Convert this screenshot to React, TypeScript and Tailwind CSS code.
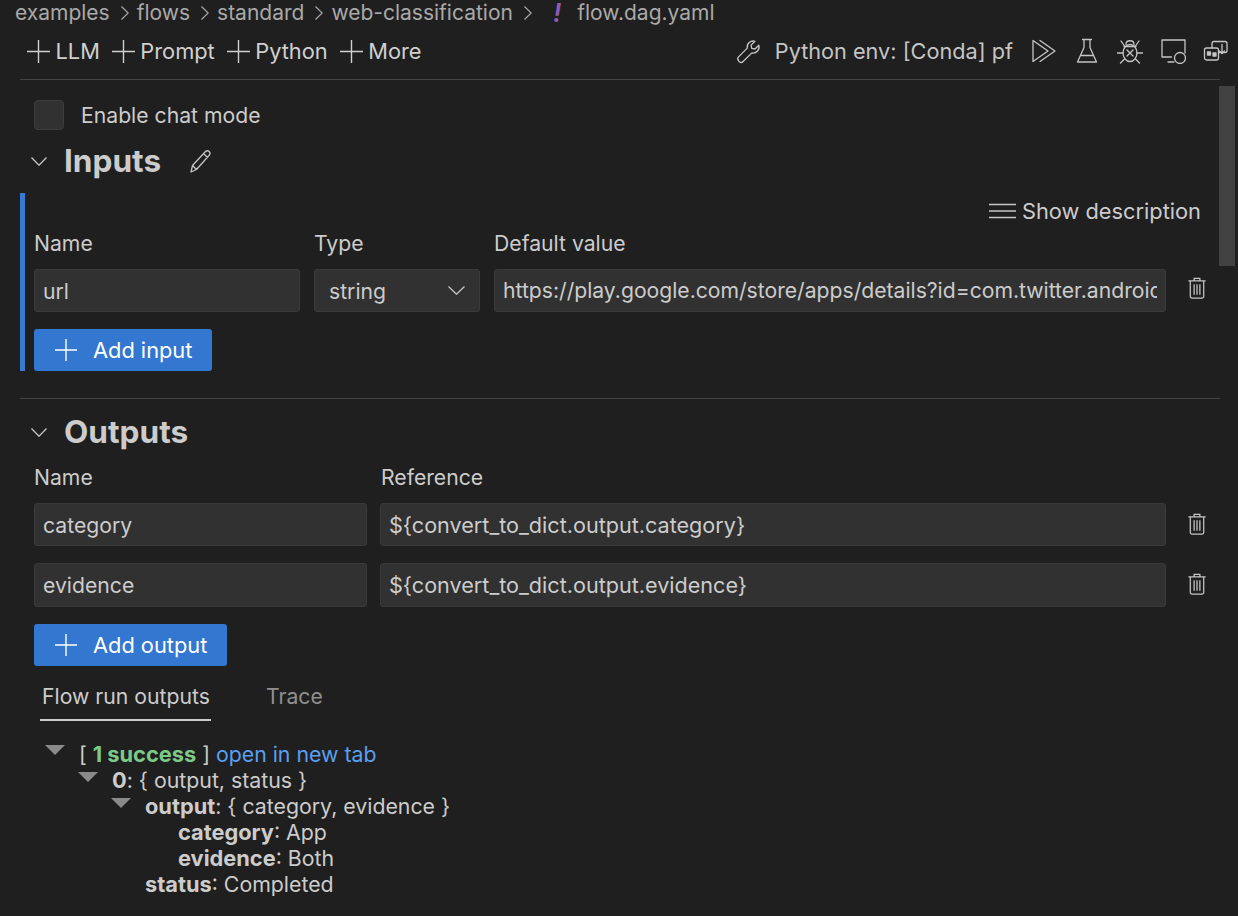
import type { ReactNode } from "react";

function Svg({ children }: { children: ReactNode }) {
  return (
    <svg width={26} height={26} viewBox="0 0 26 26" fill="none" stroke="#c5c5c5" strokeWidth={1.3} strokeLinejoin="round" strokeLinecap="round" className="shrink-0">
      {children}
    </svg>
  );
}

function PlusIcon({ size }: { size: number }) {
  return (
    <svg width={size} height={size} viewBox={`0 0 ${size} ${size}`} fill="none" stroke="currentColor" strokeWidth={1.4} className="shrink-0">
      <path d={`M${size / 2} 0v${size}M0 ${size / 2}h${size}`} />
    </svg>
  );
}

function ChevronDownIcon({ w = 16, h = 9 }: { w?: number; h?: number }) {
  return (
    <svg width={w} height={h} viewBox={`0 0 ${w} ${h}`} fill="none" stroke="#c5c5c5" strokeWidth={1.3} className="shrink-0">
      <path d={`M0.5 0.5L${w / 2} ${h - 0.8}L${w - 0.5} 0.5`} />
    </svg>
  );
}

function Crumb({ label }: { label: string }) {
  return (
    <>
      <span>{label}</span>
      <svg width="8" height="14" viewBox="0 0 8 14" fill="none" stroke="#a9a9a9" strokeWidth="1.2" className="ml-[11px] mr-[8px] shrink-0">
        <path d="M0.500 0.500L7.200 7L0.500 13.500" />
      </svg>
    </>
  );
}

function AddItem({ label }: { label: string }) {
  return (
    <div className="flex items-center">
      <PlusIcon size={23} />
      <span className="ml-[5.500px]">{label}</span>
    </div>
  );
}

function Trash() {
  return (
    <svg width="20" height="23" viewBox="0 0 20 24" fill="none" stroke="#c5c5c5" strokeWidth="1.3" className="shrink-0">
      <path d="M1 5h18M7 5V2.500h6V5M3 5v16.500a1.500 1.500 0 0 0 1.500 1.500h11a1.500 1.500 0 0 0 1.500-1.500V5M7 8.500v11M10 8.500v11M13 8.500v11" />
    </svg>
  );
}

function Field({ value, className }: { value: string; className: string }) {
  return (
    <div className={`flex items-center rounded-[3px] border border-[#3a3a3a] bg-[#313131] pl-[8px] pr-[8px] overflow-hidden whitespace-nowrap ${className}`}>
      <span className="block overflow-hidden">{value}</span>
    </div>
  );
}

function AddButton({ label, width }: { label: string; width: string }) {
  return (
    <button className={`h-[42px] ${width} flex items-center rounded-[3px] bg-[#3377d0] pl-[21px] text-white text-[21.800px]`}>
      <PlusIcon size={22} />
      <span className="ml-[16px]">{label}</span>
    </button>
  );
}

function Caret({ className }: { className: string }) {
  return <span className={`absolute w-0 h-0 border-l-[10px] border-r-[10px] border-t-[10px] border-l-transparent border-r-transparent border-t-[#8a8a8a] ${className}`} />;
}

export default function App() {
  return (
    <div className="relative w-[1238px] h-[916px] overflow-hidden bg-[#1f1f1f] text-[#cccccc] text-[21.200px] leading-[26px] font-['Inter',sans-serif]">
      {/* breadcrumb */}
      <div className="h-[25px] pl-[15px] flex items-center text-[21px] text-[#a9a9a9] whitespace-nowrap">
        <Crumb label="examples" />
        <Crumb label="flows" />
        <Crumb label="standard" />
        <Crumb label="web-classification" />
        <span className="ml-[13px] mr-[16px] text-[#8e5cb8] italic font-semibold text-[26px]">!</span>
        <span>flow.dag.yaml</span>
      </div>

      {/* toolbar */}
      <div className="ml-[20px] mr-[18px] h-[55px] pb-[2px] flex items-center justify-between border-b border-[#444444]">
        <div className="flex items-center gap-[12px] pl-[7px] text-[21.800px] text-[#d0d0d0]">
          <AddItem label="LLM" />
          <AddItem label="Prompt" />
          <AddItem label="Python" />
          <AddItem label="More" />
        </div>
        <div className="-mr-[9px] flex items-center text-[#c5c5c5] text-[21.700px]">
          <Svg>
            <path d="M3.500 22.500a2.600 2.600 0 0 1 0-3.600l8.800-8.800a6 6 0 0 1 7.600-6.800l-3.800 3.800.6 3.300 3.300.6 3.800-3.800a6 6 0 0 1-6.900 7.700l-8.800 8.600a2.600 2.600 0 0 1-4.600-1z" />
          </Svg>
          <span className="ml-[14px]">Python env: [Conda] pf</span>
          <div className="ml-[18px] flex items-center gap-[17px]">
            <Svg>
              <path d="M2 2.500v21l15-10.500z" />
              <path d="M9 2.500l15 10.500-15 10.500" />
            </Svg>
            <Svg>
              <path d="M8.500 1.500h9M10 1.500v8L3.500 24h19L16 9.500v-8M6.500 17.500h13" />
            </Svg>
            <Svg>
              <path d="M9 6.500c0-5 8-5 8 0M7 8.500h12" />
              <ellipse cx="13" cy="15" rx="7" ry="8.500" />
              <path d="M10 12l6 6M16 12l-6 6M4 3l3.500 5M22 3l-3.500 5M0.500 15H6M25.500 15H20M3.500 25l4-4M22.500 25l-4-4" />
            </Svg>
            <Svg>
              <path d="M11.500 19H2V2h23v13M8 24h6" />
              <circle cx="20" cy="20" r="5.500" />
            </Svg>
            <Svg>
              <rect x="1.500" y="10" width="14" height="12" rx="2" />
              <path d="M9 10V5.500a2 2 0 0 1 2-2h11a2 2 0 0 1 2 2v7a2 2 0 0 1-2 2h-6.500" />
              <path d="M19 6.500v9l-2.500-2.500M19 15.500l2.500-2.500" />
              <rect x="4.500" y="14" width="3" height="3" fill="#c5c5c5" />
              <rect x="10" y="15" width="3" height="3" fill="#c5c5c5" />
            </Svg>
          </div>
        </div>
      </div>

      {/* scrollbar */}
      <div className="absolute left-[1219px] top-[86px] w-[16px] h-[180px] bg-[#424242]" />

      {/* chat mode */}
      <div className="mt-[20px] ml-[34px] h-[30px] flex items-center">
        <span className="w-[30px] h-[30px] rounded-[4px] border border-[#3c3c3c] bg-[#313131]" />
        <span className="ml-[17px]">Enable chat mode</span>
      </div>

      {/* inputs */}
      <div className="mt-[13px] ml-[31px] h-[36px] flex items-center">
        <ChevronDownIcon />
        <h2 className="ml-[17px] text-[31.600px] font-bold leading-[36px]">Inputs</h2>
        <svg width="26" height="26" viewBox="0 0 26 26" fill="none" stroke="#c5c5c5" strokeWidth="1.3" className="ml-[27px]" strokeLinejoin="round">
          <path d="M3 24l1.500-6.500L17.500 3.500a2.600 2.600 0 0 1 3.700 0 2.800 2.800 0 0 1 0 3.800L8.500 21.500zM4.500 17.500l4 4M15.500 5.500l4 4" />
        </svg>
      </div>

      <div className="mt-[14px] ml-[20px] w-[1190px] h-[178px] border-l-[5px] border-[#3b7ad1] pl-[9px]">
        <div className="h-[36px] flex items-center justify-end pr-[9px] text-[21.800px]">
          <svg width="27" height="16" viewBox="0 0 27 16" fill="none" stroke="#c5c5c5" strokeWidth="1.4">
            <path d="M0 1.500h27M0 8h27M0 14.500h27" />
          </svg>
          <span className="ml-[6px]">Show description</span>
        </div>
        <div className="mt-[1px] grid grid-cols-[266px_166px_672px] gap-x-[14px] h-[26px]">
          <span>Name</span>
          <span>Type</span>
          <span>Default value</span>
        </div>
        <div className="mt-[13px] flex items-center">
          <Field value="url" className="h-[43px] w-[266px]" />
          <div className="ml-[14px] h-[43px] w-[166px] flex items-center justify-between rounded-[3px] border border-[#3a3a3a] bg-[#313131] pl-[14px] pr-[14px]">
            <span>string</span>
            <ChevronDownIcon w={17} h={9} />
          </div>
          <Field value="https://play.google.com/store/apps/details?id=com.twitter.android" className="h-[43px] ml-[14px] w-[672px] text-[21.150px]" />
          <div className="ml-[21px] -mt-[6px]"><Trash /></div>
        </div>
        <div className="mt-[17px]">
          <AddButton label="Add input" width="w-[178px]" />
        </div>
      </div>

      <div className="mt-[27px] ml-[20px] w-[1200px] border-t border-[#444444]" />

      {/* outputs */}
      <div className="mt-[15px] ml-[31px] h-[36px] flex items-center">
        <ChevronDownIcon />
        <h2 className="ml-[17px] text-[31.600px] font-bold leading-[36px]">Outputs</h2>
      </div>

      <div className="ml-[34px] mt-[14px] grid grid-cols-[333px_786px] gap-x-[13px] h-[26px]">
        <span>Name</span>
        <span className="pl-[1px]">Reference</span>
      </div>
      <div className="ml-[34px] mt-[13px] flex flex-col gap-[17px]">
        <div className="flex items-center">
          <Field value="category" className="h-[43px] w-[333px]" />
          <Field value="${convert_to_dict.output.category}" className="h-[43px] ml-[13px] w-[786px] text-[21.600px]" />
          <div className="ml-[21px] -mt-[3px]"><Trash /></div>
        </div>
        <div className="flex items-center">
          <Field value="evidence" className="h-[44px] w-[333px]" />
          <Field value="${convert_to_dict.output.evidence}" className="h-[44px] ml-[13px] w-[786px] text-[21.600px]" />
          <div className="ml-[21px] -mt-[3px]"><Trash /></div>
        </div>
      </div>
      <div className="ml-[34px] mt-[17px]">
        <AddButton label="Add output" width="w-[193px]" />
      </div>

      {/* tabs */}
      <div className="ml-[40px] mt-[17px] h-[38px] flex">
        <div className="w-[171px] pl-[2px] border-b-2 border-[#cccccc] whitespace-nowrap">Flow run outputs</div>
        <div className="ml-[55px] text-[#8f8f8f]">Trace</div>
      </div>

      {/* run tree */}
      <div className="ml-[45px] mt-[20px] whitespace-pre text-[21.300px]">
        <div className="relative pl-[34px]">
          <Caret className="left-0 top-[4px]" />
          {"[ "}<b className="text-[21.800px] text-[#7cc98a]">1 success</b>{" ] "}<span className="text-[#5a9ff0]">open in new tab</span>
        </div>
        <div className="relative pl-[67px]">
          <Caret className="left-[33px] top-[5px]" />
          <b className="text-[21.800px]">0</b>: {"{ output, status }"}
        </div>
        <div className="relative pl-[100px]">
          <Caret className="left-[66px] top-[5px]" />
          <b className="text-[21.800px]">output</b>: {"{ category, evidence }"}
        </div>
        <div className="pl-[133px]"><b className="text-[21.800px]">category</b>: App</div>
        <div className="pl-[133px]"><b className="text-[21.800px]">evidence</b>: Both</div>
        <div className="pl-[100px]"><b className="text-[21.800px]">status</b>: Completed</div>
      </div>
    </div>
  );
}
